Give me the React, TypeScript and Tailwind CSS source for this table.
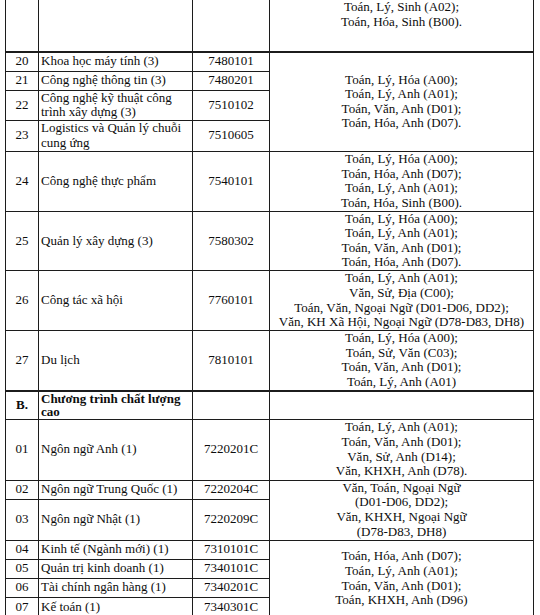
import React from "react";

type Row = {
  no: string;
  name: React.ReactNode;
  code: string;
  h: string;
  combos?: string[];
  span?: number;
};

const cell = "border border-[#1c1c1c] p-0 align-middle";

const Combos = ({ lines }: { lines: string[] }) => (
  <div className="flex flex-col items-center whitespace-nowrap leading-[14.6px]">
    {lines.map((l, i) => (
      <span key={i}>{l}</span>
    ))}
  </div>
);

const khoiA = [
  "Toán, Lý, Hóa (A00);",
  "Toán, Lý, Anh (A01);",
  "Toán, Văn, Anh (D01);",
  "Toán, Hóa, Anh (D07).",
];

const rows: Row[] = [
  { no: "20", name: "Khoa học máy tính (3)", code: "7480101", h: "h-[19px]", combos: khoiA, span: 4 },
  { no: "21", name: "Công nghệ thông tin (3)", code: "7480201", h: "h-[19px]" },
  {
    no: "22",
    name: (
      <>
        Công nghệ kỹ thuật công
        <br />
        trình xây dựng (3)
      </>
    ),
    code: "7510102",
    h: "h-[30px]",
  },
  {
    no: "23",
    name: (
      <>
        Logistics và Quản lý chuỗi
        <br />
        cung ứng
      </>
    ),
    code: "7510605",
    h: "h-[31px]",
  },
  {
    no: "24",
    name: "Công nghệ thực phẩm",
    code: "7540101",
    h: "h-[60px]",
    combos: ["Toán, Lý, Hóa (A00);", "Toán, Hóa, Anh (D07);", "Toán, Lý, Anh (A01);", "Toán, Hóa, Sinh (B00)."],
    span: 1,
  },
  { no: "25", name: "Quản lý xây dựng (3)", code: "7580302", h: "h-[58px]", combos: khoiA, span: 1 },
  {
    no: "26",
    name: "Công tác xã hội",
    code: "7760101",
    h: "h-[60px]",
    combos: [
      "Toán, Lý, Anh (A01);",
      "Văn, Sử, Địa (C00);",
      "Toán, Văn, Ngoại Ngữ (D01-D06, DD2);",
      "Văn, KH Xã Hội, Ngoại Ngữ (D78-D83, DH8)",
    ],
    span: 1,
  },
  {
    no: "27",
    name: "Du lịch",
    code: "7810101",
    h: "h-[60px]",
    combos: ["Toán, Lý, Hóa (A00);", "Toán, Sử, Văn (C03);", "Toán, Văn, Anh (D01);", "Toán, Lý, Anh (A01)"],
    span: 1,
  },
];

const clc: Row[] = [
  {
    no: "01",
    name: "Ngôn ngữ Anh (1)",
    code: "7220201C",
    h: "h-[61px]",
    combos: ["Toán, Lý, Anh (A01);", "Toán, Văn, Anh (D01);", "Văn, Sử, Anh (D14);", "Văn, KHXH, Anh (D78)."],
    span: 1,
  },
  {
    no: "02",
    name: "Ngôn ngữ Trung Quốc (1)",
    code: "7220204C",
    h: "h-[19px]",
    combos: ["Văn, Toán, Ngoại Ngữ", "(D01-D06, DD2);", "Văn, KHXH, Ngoại Ngữ", "(D78-D83, DH8)"],
    span: 2,
  },
  { no: "03", name: "Ngôn ngữ Nhật (1)", code: "7220209C", h: "h-[41px]" },
  {
    no: "04",
    name: "Kinh tế (Ngành mới) (1)",
    code: "7310101C",
    h: "h-[19px]",
    combos: ["Toán, Hóa, Anh (D07);", "Toán, Lý, Anh (A01);", "Toán, Văn, Anh (D01);", "Toán, KHXH, Anh (D96)"],
    span: 4,
  },
  { no: "05", name: "Quản trị kinh doanh (1)", code: "7340101C", h: "h-[19px]" },
  { no: "06", name: "Tài chính ngân hàng (1)", code: "7340201C", h: "h-[19px]" },
  { no: "07", name: "Kế toán (1)", code: "7340301C", h: "h-[20px]" },
];

const TableRow = ({ r }: { r: Row }) => (
  <tr className={r.h}>
    <td className={`${cell} text-center`}>{r.no}</td>
    <td className={`${cell} pl-[2px] text-left whitespace-nowrap`}>{r.name}</td>
    <td className={`${cell} text-center`}>{r.code}</td>
    {r.combos && (
      <td className={cell} rowSpan={r.span}>
        <Combos lines={r.combos} />
      </td>
    )}
  </tr>
);

export default function App() {
  return (
    <div className="h-[615px] w-[540px] overflow-hidden bg-white">
      <table
        className="ml-[5px] w-[528px] table-fixed border-collapse text-[13px] leading-[14.6px] text-[#0d0d0d]"
        style={{ fontFamily: '"Liberation Serif", "Times New Roman", serif' }}
      >
        <colgroup>
          <col className="w-[33px]" />
          <col className="w-[154px]" />
          <col className="w-[77px]" />
          <col className="w-[264px]" />
        </colgroup>
        <tbody>
          <tr className="h-[52px]">
            <td className={`${cell} border-t-0 border-b-2`} />
            <td className={`${cell} border-t-0 border-b-2`} />
            <td className={`${cell} border-t-0 border-b-2`} />
            <td className={`${cell} border-t-0 border-b-2 align-top`}>
              <Combos lines={["Toán, Lý, Sinh (A02);", "Toán, Hóa, Sinh (B00)."]} />
            </td>
          </tr>
          {rows.map((r) => (
            <TableRow key={r.no} r={r} />
          ))}
          <tr className="h-[28px]">
            <td className={`${cell} border-t-2 text-center font-bold`}>B.</td>
            <td className={`${cell} border-t-2 pl-[2px] font-bold whitespace-nowrap leading-[13.5px]`}>
              Chương trình chất lượng
              <br />
              cao
            </td>
            <td className={`${cell} border-t-2`} />
            <td className={`${cell} border-t-2`} />
          </tr>
          {clc.map((r) => (
            <TableRow key={r.no} r={r} />
          ))}
        </tbody>
      </table>
    </div>
  );
}
